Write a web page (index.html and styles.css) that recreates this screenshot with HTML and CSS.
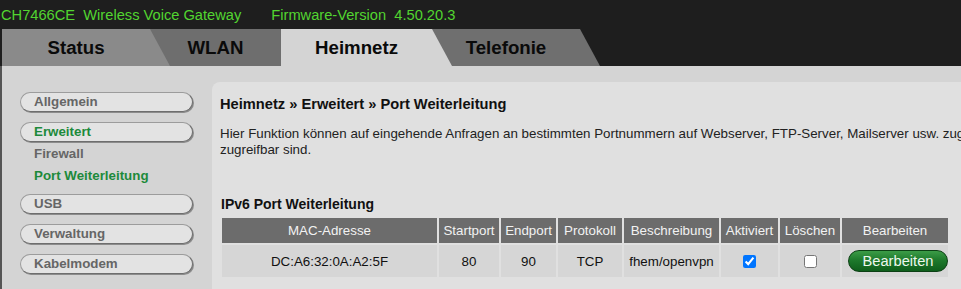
FILE: index.html
```html
<!DOCTYPE html>
<html lang="de">
<head>
<meta charset="utf-8">
<title>Heimnetz - Port Weiterleitung</title>
<link rel="stylesheet" href="styles.css">
</head>
<body>
<header class="top">
  <div class="brand"><span>CH7466CE&nbsp; Wireless Voice Gateway</span><span class="fw">Firmware-Version&nbsp; 4.50.20.3</span></div>
  <nav class="tabs">
    <a class="tab tab-status">Status</a>
    <a class="tab tab-wlan">WLAN</a>
    <a class="tab tab-heim active">Heimnetz</a>
    <a class="tab tab-tel">Telefonie</a>
  </nav>
</header>
<div class="main">
  <aside class="side">
    <div class="pill">Allgemein</div>
    <div class="pill open current">Erweitert</div>
    <ul class="submenu">
      <li>Firewall</li>
      <li class="current">Port Weiterleitung</li>
    </ul>
    <div class="pill">USB</div>
    <div class="pill">Verwaltung</div>
    <div class="pill">Kabelmodem</div>
  </aside>
  <section class="panel">
    <h1 class="title">Heimnetz » Erweitert » Port Weiterleitung</h1>
    <p class="intro">Hier Funktion können auf eingehende Anfragen an bestimmten Portnummern auf Webserver, FTP-Server, Mailserver usw. zugeordnet werden, die dann vom Internet aus<br>zugreifbar sind.</p>
    <h2 class="sub">IPv6 Port Weiterleitung</h2>
    <table class="grid">
      <colgroup>
        <col class="c-mac"><col class="c-start"><col class="c-end"><col class="c-proto"><col class="c-desc"><col class="c-act"><col class="c-del"><col class="c-edit">
      </colgroup>
      <thead>
        <tr><th>MAC-Adresse</th><th>Startport</th><th>Endport</th><th>Protokoll</th><th>Beschreibung</th><th>Aktiviert</th><th>Löschen</th><th>Bearbeiten</th></tr>
      </thead>
      <tbody>
        <tr>
          <td>DC:A6:32:0A:A2:5F</td><td>80</td><td>90</td><td>TCP</td><td>fhem/openvpn</td>
          <td><input type="checkbox" checked></td>
          <td><input type="checkbox"></td>
          <td class="edit"><button class="btn">Bearbeiten</button></td>
        </tr>
      </tbody>
    </table>
  </section>
</div>
</body>
</html>
```

FILE: styles.css
```css
html, body {
  margin: 0;
  padding: 0;
  height: 100%;
  overflow: hidden;
}
body {
  background: #d4d4d4;
  font-family: "Liberation Sans", Arial, sans-serif;
  color: #111;
}
.top {
  background: #1e1e1e;
}
.brand {
  height: 28px;
  padding: 1px 0 0 1px;
  line-height: 28px;
  font-size: 14.67px;
  color: #52d530;
  white-space: nowrap;
}
.brand .fw {
  margin-left: 30px;
}
.tabs {
  display: flex;
  height: 37px;
  padding-left: 2px;
}
.tab {
  box-sizing: border-box;
  height: 37px;
  line-height: 37px;
  padding-right: 20px;
  margin-right: -20px;
  text-align: center;
  font-size: 18.67px;
  font-weight: bold;
  color: #0a0a0a;
  clip-path: polygon(0 0, calc(100% - 20px) 0, 100% 100%, 0 100%);
}
.tab-status { width: 168px; background: #8a8a8a; z-index: 3; }
.tab-wlan { width: 151px; background: #6e6e6e; z-index: 2; }
.tab-heim { width: 171px; background: #d4d4d4; z-index: 4; }
.tab-tel { width: 168px; background: #6f6f6f; z-index: 1; }

.main {
  display: flex;
  border-left: 2px solid #555;
  height: 223px;
}
.side {
  flex: none;
  box-sizing: border-box;
  width: 210px;
  padding: 26px 0 0 18px;
}
.pill {
  box-sizing: border-box;
  width: 173px;
  height: 20px;
  margin-bottom: 10px;
  padding-left: 13px;
  border: 1px solid #9c9c9c;
  border-right-color: #6e6e6e;
  border-bottom-color: #6e6e6e;
  border-radius: 10px;
  box-shadow: 1px 1px 0 #8c8c8c;
  background: #e3e3e3;
  font-size: 13.33px;
  font-weight: bold;
  line-height: 18px;
  color: #666;
}
.pill.open {
  margin-bottom: 1px;
}
.current {
  color: #1d8a3b !important;
}
.submenu {
  list-style: none;
  margin: 0 0 7px;
  padding: 0 0 0 14px;
  font-size: 13.33px;
  font-weight: bold;
  line-height: 22px;
  color: #666;
}
.panel {
  flex: none;
  width: 1200px;
  margin-top: 16px;
  padding: 14px 0 0 8px;
  background: #e0e0e0;
  border-top-left-radius: 8px;
}
.title {
  margin: 0;
  font-size: 14.67px;
  line-height: 17px;
  font-weight: bold;
  color: #111;
}
.intro {
  margin: 13px 0 0;
  font-size: 13.33px;
  line-height: 16px;
  color: #222;
  white-space: nowrap;
}
.sub {
  margin: 38px 0 0 1px;
  font-size: 14px;
  line-height: 16px;
  font-weight: bold;
  color: #111;
}
.grid {
  margin-top: 4px;
  table-layout: fixed;
  width: 730px;
  border-spacing: 2px;
  font-size: 13.33px;
}
.c-mac { width: 215px; }
.c-start { width: 60px; }
.c-end { width: 55px; }
.c-proto { width: 64px; }
.c-desc { width: 95px; }
.c-act { width: 57px; }
.c-del { width: 60px; }
.c-edit { width: 106px; }
.grid th {
  height: 25px;
  padding: 0;
  background: #6c6c6c;
  color: #f2f2f2;
  font-weight: normal;
  text-align: center;
  white-space: nowrap;
}
.grid td {
  height: 32px;
  padding: 0;
  background: #d6d6d6;
  color: #111;
  text-align: center;
  white-space: nowrap;
}
.grid td.edit {
  text-align: left;
  padding-left: 6px;
}
.grid input {
  margin: 0;
  width: 13px;
  height: 13px;
  vertical-align: middle;
}
.btn {
  box-sizing: border-box;
  width: 100px;
  height: 22px;
  padding: 0;
  border: 1px solid #0c4014;
  border-radius: 11px;
  background: linear-gradient(#3c9c47, #1e7a2c 45%, #0f5e1c);
  color: #eef7ee;
  font-family: "Liberation Sans", Arial, sans-serif;
  font-size: 14.67px;
  line-height: 20px;
  vertical-align: middle;
}
```
